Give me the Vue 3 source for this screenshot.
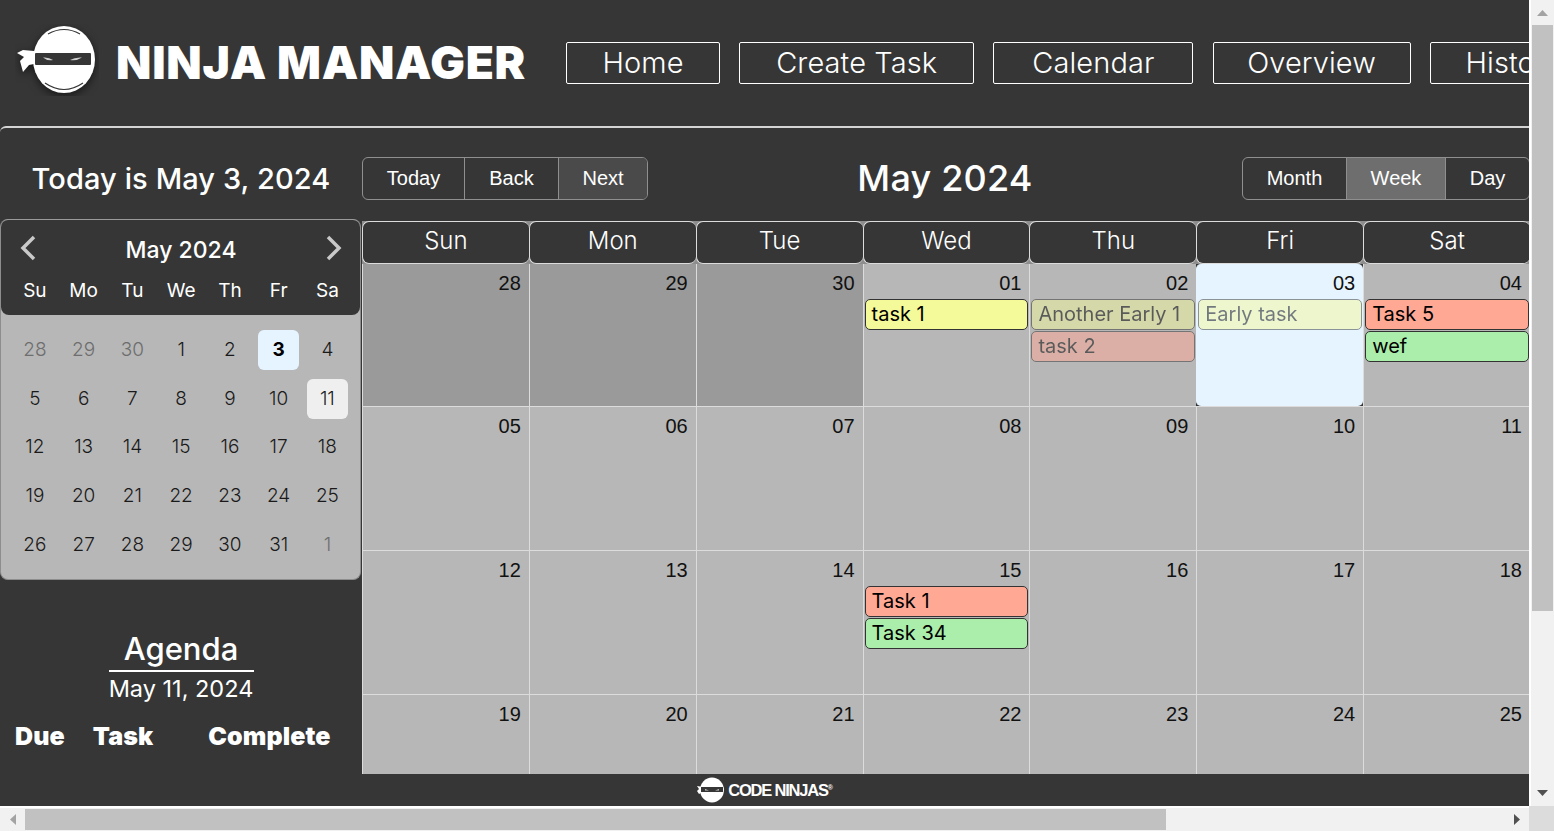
<template>
  <div class="window">
    <div class="viewport">
      <header class="topbar">
        <svg class="logo" viewBox="0 0 84 72" width="84" height="72">
          <g class="logo-shape">
            <path d="M19 27 L8 26 L2 29 L9 33 L5 37 L8 48 L14 41 L19 40 Z" fill="#fff" />
            <ellipse cx="49" cy="35.500" rx="31" ry="33.500" fill="#fff" />
            <path d="M33 10 Q49 1 65 10" fill="none" stroke="#363636" stroke-width="1.200" />
            <path d="M30 59 Q49 72 68 59" fill="none" stroke="#363636" stroke-width="1.200" />
            <rect x="20" y="29" width="56" height="12" rx="1" fill="#363636" />
            <path d="M28 33.500 Q34 33 38 36 Q32 37 28 33.500 Z" fill="#cfcfcf" />
            <path d="M67 33.500 Q60 33 55 36 Q62 37 67 33.500 Z" fill="#cfcfcf" />
          </g>
        </svg>
        <h1 class="brand">NINJA MANAGER</h1>
        <nav class="nav">
          <a v-for="item in navItems" :key="item.label" class="nav-link" :style="{ width: item.width + 'px' }">{{ item.label }}</a>
        </nav>
      </header>

      <section class="panel">
        <aside class="side">
          <h2 class="today-label">Today is May 3, 2024</h2>

          <div class="mini">
            <div class="mini-head">
              <div class="mini-title">
                <svg width="18" height="28" viewBox="0 0 18 28"><path d="M15 3 L4 14 L15 25" fill="none" stroke="#c9c9c9" stroke-width="3.500" /></svg>
                <span>May 2024</span>
                <svg width="18" height="28" viewBox="0 0 18 28"><path d="M3 3 L14 14 L3 25" fill="none" stroke="#c9c9c9" stroke-width="3.500" /></svg>
              </div>
              <div class="mini-row mini-days">
                <span v-for="d in miniDays" :key="d">{{ d }}</span>
              </div>
            </div>
            <div class="mini-body">
              <div v-for="(week, i) in miniWeeks" :key="i" class="mini-row mini-week">
                <span
                  v-for="day in week"
                  :key="day.n + '-' + day.off"
                  class="mini-day"
                  :class="{ off: day.off, current: day.n === 3 && !day.off, picked: day.n === 11 }"
                >{{ day.n }}</span>
              </div>
            </div>
          </div>

          <div class="agenda">
            <h3 class="agenda-title">Agenda</h3>
            <p class="agenda-date">May 11, 2024</p>
            <div class="agenda-cols">
              <span>Due</span>
              <span>Task</span>
              <span>Complete</span>
            </div>
          </div>
        </aside>

        <div class="main">
          <div class="toolbar">
            <div class="btn-group">
              <button class="btn" style="width: 101px">Today</button>
              <button class="btn" style="width: 94px">Back</button>
              <button class="btn hover" style="width: 89px">Next</button>
            </div>
            <h2 class="month-title">May 2024</h2>
            <div class="btn-group">
              <button class="btn" style="width: 103px">Month</button>
              <button class="btn active" style="width: 99px">Week</button>
              <button class="btn" style="width: 84px">Day</button>
            </div>
          </div>

          <div class="month">
            <div class="month-head">
              <div v-for="d in weekDays" :key="d" class="head-cell">{{ d }}</div>
            </div>
            <div v-for="(week, i) in weeks" :key="i" class="week" :class="{ first: i === 0 }">
              <div v-for="cell in week" :key="cell.label" class="cell" :class="{ past: cell.past, now: cell.now }">
                <div class="cell-date">{{ cell.label }}</div>
                <div
                  v-for="ev in cell.events"
                  :key="ev.title"
                  class="event"
                  :class="[ev.color, { faded: ev.faded }]"
                >{{ ev.title }}</div>
              </div>
            </div>
          </div>
        </div>
      </section>

      <footer class="foot">
        <svg viewBox="0 0 30 26" width="30" height="26">
          <path d="M7 10 L1 9 L3 12 L1 14 L3 17 L7 15 Z" fill="#fff" />
          <ellipse cx="16" cy="13" rx="12" ry="12.500" fill="#fff" />
          <rect x="5" y="10" width="22" height="5" fill="#363636" />
          <path d="M9 12 L13 13.500 L9 13.500 Z M23 12 L19 13.500 L23 13.500 Z" fill="#ccc" />
        </svg>
        <span class="foot-text">CODE NINJAS<sup>®</sup></span>
      </footer>
    </div>

    <div class="vbar">
      <svg width="25" height="25" viewBox="0 0 25 25"><path d="M7 16 L12.500 10 L18 16 Z" fill="#a3a3a3" /></svg>
      <div class="vthumb"></div>
      <svg width="25" height="25" viewBox="0 0 25 25"><path d="M7 9 L18 9 L12.500 15 Z" fill="#505050" /></svg>
    </div>
    <div class="hbar">
      <svg width="25" height="25" viewBox="0 0 25 25"><path d="M16 7 L16 18 L10 12.500 Z" fill="#a3a3a3" /></svg>
      <div class="hthumb"></div>
      <svg width="25" height="25" viewBox="0 0 25 25"><path d="M10 7 L16 12.500 L10 18 Z" fill="#505050" /></svg>
    </div>
    <div class="corner"></div>
  </div>
</template>

<script setup>
const navItems = [
  { label: 'Home', width: 154 },
  { label: 'Create Task', width: 235 },
  { label: 'Calendar', width: 200 },
  { label: 'Overview', width: 198 },
  { label: 'History', width: 168 },
]

const miniDays = ['Su', 'Mo', 'Tu', 'We', 'Th', 'Fr', 'Sa']
const weekDays = ['Sun', 'Mon', 'Tue', 'Wed', 'Thu', 'Fri', 'Sat']

const nums = [28, 29, 30, 1, 2, 3, 4, 5, 6, 7, 8, 9, 10, 11, 12, 13, 14, 15, 16, 17, 18, 19, 20, 21, 22, 23, 24, 25, 26, 27, 28, 29, 30, 31, 1]
const miniWeeks = []
for (let i = 0; i < 5; i++) {
  miniWeeks.push(nums.slice(i * 7, i * 7 + 7).map((n, j) => ({
    n,
    off: (i === 0 && j < 3) || (i === 4 && j === 6),
  })))
}

const events = {
  '01': [{ title: 'task 1', color: 'yellow' }],
  '02': [
    { title: 'Another Early 1', color: 'yellow', faded: true },
    { title: 'task 2', color: 'red', faded: true },
  ],
  '03': [{ title: 'Early task', color: 'yellow', faded: true }],
  '04': [
    { title: 'Task 5', color: 'red' },
    { title: 'wef', color: 'green' },
  ],
  '15': [
    { title: 'Task 1', color: 'red' },
    { title: 'Task 34', color: 'green' },
  ],
}

const labels = ['28', '29', '30', '01', '02', '03', '04', '05', '06', '07', '08', '09', '10', '11', '12', '13', '14', '15', '16', '17', '18', '19', '20', '21', '22', '23', '24', '25']
const weeks = []
for (let i = 0; i < 4; i++) {
  weeks.push(labels.slice(i * 7, i * 7 + 7).map((label, j) => ({
    label,
    past: i === 0 && j < 3,
    now: label === '03',
    events: events[label] || [],
  })))
}
</script>

<style>
html, body {
  margin: 0;
  overflow: hidden;
}
</style>

<style scoped>
.window {
  width: 1554px;
  height: 831px;
  display: grid;
  grid-template-columns: 1529px 25px;
  grid-template-rows: 806px 25px;
  font-family: Inter, "Open Sans", sans-serif;
  overflow: hidden;
}

.viewport {
  display: flex;
  flex-direction: column;
  overflow: hidden;
  background: #363636;
}

.topbar {
  height: 126px;
  flex: none;
  display: flex;
  align-items: center;
  color: #fff;
  white-space: nowrap;
}

.logo {
  flex: none;
  margin: -6px 0 0 15px;
}

.logo-shape {
  filter: drop-shadow(0 3px 4px rgba(0, 0, 0, 0.55));
}

.brand {
  flex: none;
  width: 409px;
  margin: -2px 0 0 17px;
  font-size: 46px;
  font-weight: 900;
  letter-spacing: 0.75px;
}

.nav {
  display: flex;
  gap: 19.200px;
  margin-left: 41px;
}

.nav-link {
  flex: none;
  box-sizing: border-box;
  height: 42px;
  border: 1px solid #fff;
  border-radius: 2px;
  font-size: 29px;
  font-weight: 300;
  letter-spacing: 0.1px;
  line-height: 40px;
  text-align: center;
}

.panel {
  flex: 1;
  min-height: 0;
  display: flex;
  border-top: 2px solid #d4d4d4;
  border-top-left-radius: 6px;
  color: #fff;
  overflow: hidden;
}

.side {
  width: 362px;
  flex: none;
  text-align: center;
}

.today-label {
  margin: 0;
  height: 91px;
  font-size: 29px;
  font-weight: 500;
  letter-spacing: 0.1px;
  line-height: 101px;
  white-space: nowrap;
}

.mini {
  height: 361px;
  width: 361px;
  border: 1px solid #8d8d8d;
  border-top-color: #9a9a9a;
  box-sizing: border-box;
  border-radius: 8px;
  overflow: hidden;
  background: #b7b7b7;
}

.mini-head {
  height: 95px;
  background: #363636;
  border-radius: 0 0 8px 8px;
}

.mini-title {
  display: flex;
  align-items: center;
  justify-content: space-between;
  padding: 12px 17px 0 18px;
  font-size: 23px;
  font-weight: 500;
}

.mini-title span {
  margin-top: 4px;
}

.mini-row {
  display: grid;
  grid-template-columns: repeat(7, 48.750px);
  padding-left: 9.500px;
}

.mini-days {
  margin-top: 15px;
  font-size: 19px;
}

.mini-body {
  padding-top: 10.600px;
}

.mini-week {
  height: 48.750px;
  align-items: center;
  justify-items: center;
  color: #1a1a1a;
  font-size: 19px;
  font-weight: 300;
}

.mini-day {
  width: 41px;
  height: 40px;
  border-radius: 6px;
  line-height: 40px;
}

.mini-day.off {
  color: #6e6e6e;
}

.mini-day.current {
  background: #e6f4ff;
  color: #000;
  font-weight: 700;
}

.mini-day.picked {
  background: #efefef;
}

.agenda {
  padding-top: 50px;
}

.agenda-title {
  width: 145px;
  margin: 0 auto;
  padding-bottom: 2px;
  border-bottom: 2px solid #fff;
  font-size: 31px;
  font-weight: 500;
  line-height: 38px;
}

.agenda-date {
  margin: 0;
  font-size: 23.500px;
  line-height: 34px;
}

.agenda-cols {
  display: flex;
  margin-top: 14px;
  padding-left: 15px;
  font-size: 25px;
  font-weight: 900;
  letter-spacing: 0.1px;
  line-height: 32px;
}

.agenda-cols span:nth-child(2) {
  margin-left: 28px;
}

.agenda-cols span:nth-child(3) {
  margin-left: 55px;
}

.main {
  width: 1168px;
  flex: none;
  display: flex;
  flex-direction: column;
}

.toolbar {
  height: 93px;
  flex: none;
  box-sizing: border-box;
  padding-top: 29px;
  display: flex;
  align-items: flex-start;
  justify-content: space-between;
}

.btn-group {
  display: flex;
  height: 43px;
  border: 1px solid #8f8f8f;
  border-radius: 6px;
  overflow: hidden;
  box-sizing: border-box;
}

.btn {
  box-sizing: border-box;
  border: 0;
  border-left: 1px solid #8f8f8f;
  background: transparent;
  color: #fff;
  font-family: "Liberation Sans", Arial, sans-serif;
  font-size: 20px;
  padding: 0;
}

.btn:first-child {
  border-left: 0;
}

.btn.hover {
  background: #4a4a4a;
}

.btn.active {
  background: #6e6e6e;
}

.month-title {
  margin: 0;
  font-size: 36px;
  font-weight: 500;
  letter-spacing: 0.2px;
  line-height: 42px;
}

.month {
  flex: 1;
  min-height: 0;
  overflow: hidden;
  background: #b7b7b7;
}

.month-head {
  height: 43px;
  display: grid;
  grid-template-columns: repeat(7, 1fr);
  background: #8d8d8d;
}

.head-cell {
  box-sizing: border-box;
  border-left: 1px solid #dcdcdc;
  border-top: 1px solid #dcdcdc;
  border-bottom: 1px solid #dcdcdc;
  border-radius: 7px;
  background: #363636;
  font-size: 24px;
  font-weight: 300;
  line-height: 37px;
  text-align: center;
}

.week {
  height: 144px;
  display: grid;
  grid-template-columns: repeat(7, 1fr);
  box-sizing: border-box;
  border-bottom: 1px solid #dcdcdc;
  background: #363636;
}

.week.first {
  height: 143px;
}

.cell {
  box-sizing: border-box;
  border-left: 1px solid #dcdcdc;
  padding: 7px 1px 0 1px;
  color: #111;
  background: #b7b7b7;
}

.cell.past {
  background: #9a9a9a;
}

.cell.now {
  background: #e6f4ff;
  border-left-color: #e6f4ff;
  border-radius: 5px;
}

.cell-date {
  height: 28px;
  padding-right: 7px;
  font-family: "Liberation Sans", Arial, sans-serif;
  font-size: 20px;
  line-height: 24px;
  text-align: right;
}

.event {
  box-sizing: border-box;
  height: 31px;
  margin-bottom: 1px;
  padding-left: 6px;
  border: 1px solid #333;
  border-radius: 5px;
  font-size: 20px;
  line-height: 29px;
  color: #000;
  white-space: nowrap;
  overflow: hidden;
}

.event.yellow {
  background: #f4f99a;
}

.event.red {
  background: #ffa995;
}

.event.green {
  background: #abeeab;
}

.event.faded {
  opacity: 0.5;
}

.foot {
  height: 32px;
  flex: none;
  display: flex;
  align-items: center;
  justify-content: center;
  gap: 2px;
  margin-right: 1px;
}

.foot-text {
  margin-top: 1px;
  color: #fff;
  font-family: "Liberation Sans", Arial, sans-serif;
  font-size: 16.500px;
  font-weight: 700;
  letter-spacing: -1.200px;
  white-space: nowrap;
}

.foot-text sup {
  font-size: 7px;
}

.vbar {
  display: flex;
  flex-direction: column;
  background: #f1f1f1;
  border-left: 2px solid #fff;
  box-sizing: border-box;
  align-items: center;
}

.vthumb {
  width: 21px;
  height: 586px;
  background: #c1c1c1;
}

.vbar svg:last-child {
  margin-top: auto;
}

.hbar {
  display: flex;
  align-items: center;
  background: #f1f1f1;
  border-top: 2px solid #fff;
  box-sizing: border-box;
}

.hthumb {
  width: 1141px;
  height: 21px;
  background: #c1c1c1;
}

.hbar svg:last-child {
  margin-left: auto;
}

.corner {
  background: #dcdcdc;
}
</style>
